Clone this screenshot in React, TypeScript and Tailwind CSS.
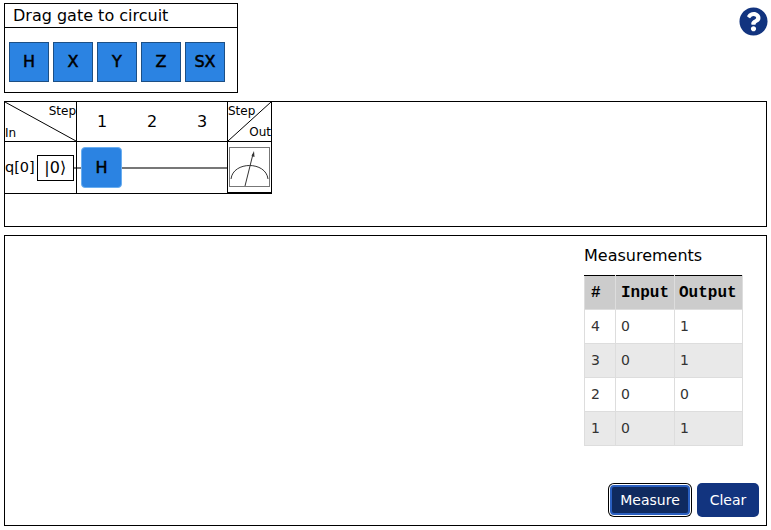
import React from 'react'
import { FaQuestionCircle } from 'react-icons/fa'

const gates = ['H', 'X', 'Y', 'Z', 'SX']

const measurements = [
  { id: 4, input: 0, output: 1 },
  { id: 3, input: 0, output: 1 },
  { id: 2, input: 0, output: 0 },
  { id: 1, input: 0, output: 1 },
]

const Gate: React.FC<{ label: string }> = ({ label }) => (
  <div className="flex h-10 w-10 items-center justify-center border border-[#1c4f85] bg-[#2b83e2] text-[16px] text-black [-webkit-text-stroke:0.5px_black]">
    {label}
  </div>
)

const MeterIcon: React.FC = () => (
  <svg viewBox="0 0 41 40" className="h-[40px] w-[41px]" fill="none">
    <rect x="0.5" y="0.5" width="40" height="39" stroke="#777" />
    <path d="M2 32 C4 14 37 14 39 32" stroke="#333" strokeWidth="1" />
    <path d="M16 39 L24 7" stroke="#333" strokeWidth="1" />
    <path d="M25 4 L25.5 10 L22.5 9 Z" fill="#333" />
  </svg>
)

const App: React.FC = () => {
  return (
    <div className="h-[530px] w-[771px] bg-white px-[4px] pt-[3px] font-['DejaVu_Sans',sans-serif] text-black">
      {/* Gate palette */}
      <div className="flex items-start justify-between">
        <div className="h-[90px] w-[234px] border border-black">
          <div className="h-[24px] border-b border-black pl-2 text-[16px] leading-[23px]">Drag gate to circuit</div>
          <div className="flex gap-1 pl-1 pt-[14px]">
            {gates.map((g) => (
              <Gate key={g} label={g} />
            ))}
          </div>
        </div>
        <FaQuestionCircle className="mr-[-1px] mt-[4px] h-[29px] w-[29px] text-[#12347f]" />
      </div>

      {/* Circuit */}
      <div className="mt-[8px] h-[126px] w-[763px] border border-black">
        <div className="grid w-[267px] grid-cols-[72px_151px_44px] grid-rows-[40px_51px] border-b border-black text-[14px]">
          <div className="relative border-r border-b border-black">
            <svg className="absolute inset-0 h-full w-full" viewBox="0 0 71 39" preserveAspectRatio="none">
              <line x1="0" y1="0" x2="71" y2="39" stroke="#000" strokeWidth="1" />
            </svg>
            <span className="absolute right-0 top-[2px] text-[12px] leading-[15px]">Step</span>
            <span className="absolute bottom-0 left-0 text-[12px] leading-[15px]">In</span>
          </div>
          <div className="flex items-center justify-around border-r border-b border-black pt-[1px] text-[16px]">
            <span>1</span>
            <span>2</span>
            <span>3</span>
          </div>
          <div className="relative border-r border-b border-black">
            <svg className="absolute inset-0 h-full w-full" viewBox="0 0 43 39" preserveAspectRatio="none">
              <line x1="0" y1="39" x2="43" y2="0" stroke="#000" strokeWidth="1" />
            </svg>
            <span className="absolute left-0 top-[2px] text-[12px] leading-[15px]">Step</span>
            <span className="absolute bottom-[1px] right-0 text-[12px] leading-[15px]">Out</span>
          </div>

          <div className="flex items-center border-r border-black">
            <span className="text-[14.5px]">q[0]</span>
            <div className="ml-[2px] flex h-[26px] w-[37px] items-center justify-center border border-black text-[16px]">
              |0⟩
            </div>
            <div className="h-[2px] flex-1 bg-[#777]" />
          </div>
          <div className="flex items-center border-r border-black">
            <div className="h-[2px] w-[4px] bg-[#777]" />
            <div className="flex h-[41px] w-[41px] items-center justify-center rounded-[4px] border border-[#6aaef0] bg-[#2b83e2] text-[16px] [-webkit-text-stroke:0.5px_black]">
              H
            </div>
            <div className="h-[2px] flex-1 bg-[#777]" />
          </div>
          <div className="flex items-center justify-center border-r border-b border-black">
            <MeterIcon />
          </div>
        </div>
      </div>

      {/* Results */}
      <div className="mt-[8px] flex h-[291px] w-[763px] flex-col items-end border border-black">
        <div className="mr-[23px] mt-[10px] w-[159px]">
          <div className="text-[16px] leading-[20px]">Measurements</div>
          <table className="mt-[9px] w-[159px] table-fixed border-collapse text-[14px] text-[#333]">
            <thead>
              <tr className="h-[34px] bg-[#cccccc] font-['Liberation_Mono',monospace] text-black">
                <th className="w-[31px] border-x border-t border-x-[#ddd] border-t-black pl-[6px] text-left text-[16px]">#</th>
                <th className="w-[59px] border-x border-t border-x-[#ddd] border-t-black pl-[5px] text-left text-[16px]">Input</th>
                <th className="border-x border-t border-x-[#ddd] border-t-black pl-[4px] text-left text-[16px]">Output</th>
              </tr>
            </thead>
            <tbody>
              {measurements.map((m, i) => (
                <tr key={m.id} className={i % 2 === 0 ? 'h-[34px] bg-white' : 'h-[34px] bg-[#e9e9e9]'}>
                  <td className="border border-[#ddd] pl-[6px]">{m.id}</td>
                  <td className="border border-[#ddd] pl-[5px]">{m.input}</td>
                  <td className="border border-[#ddd] pl-[5px]">{m.output}</td>
                </tr>
              ))}
            </tbody>
          </table>
        </div>
        <div className="mr-[7px] mt-[37px] flex items-center gap-[7px] text-[14px] text-white">
          <button className="h-[30px] w-[80px] rounded-[4px] border-2 border-[#2a5fc0] bg-[#0f2a5f] shadow-[0_0_0_1px_white,0_0_0_2px_black]">
            Measure
          </button>
          <button className="h-[34px] w-[62px] rounded-[5px] bg-[#12347f]">Clear</button>
        </div>
      </div>
    </div>
  )
}

export default App
